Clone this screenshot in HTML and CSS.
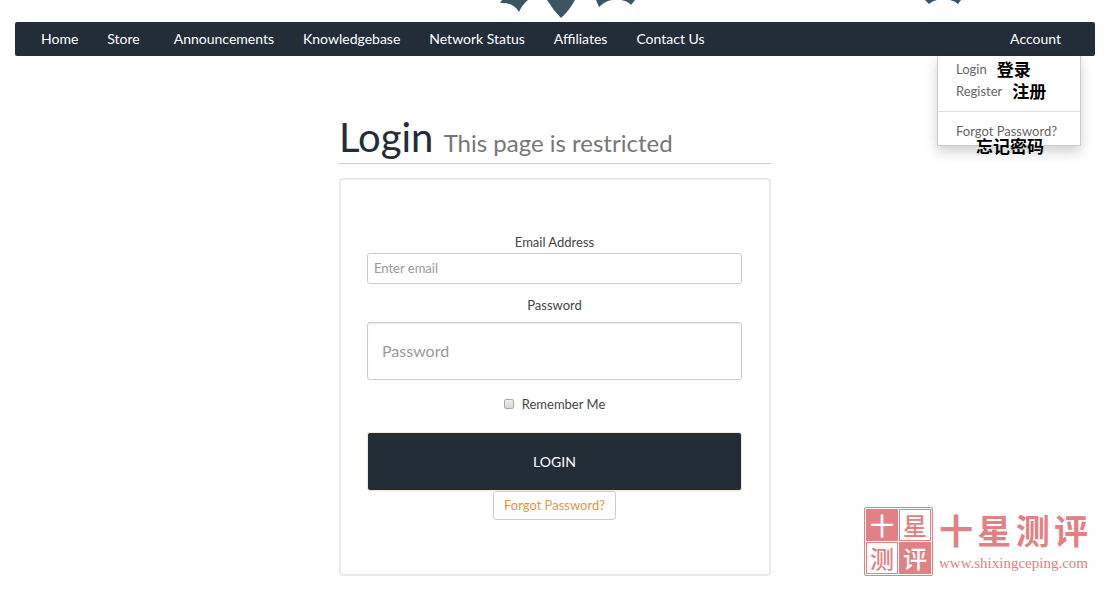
FILE: index.html
```html
<!DOCTYPE html>
<html lang="en">
<head>
<meta charset="UTF-8">
<meta name="viewport" content="width=device-width, initial-scale=1.0">
<title>Login</title>
<link rel="stylesheet" href="styles.css">
</head>
<body>
    <header class="banner">
        <svg class="banner-art" viewBox="0 0 1080 22" preserveAspectRatio="xMidYMin slice" aria-hidden="true">
            <path d="M487 0 L485 3 Q498 2 504 12 Q507 5 513 0 Z"/>
            <path d="M532 0 Q538 10 546 18 Q554 11 560 0 Z"/>
            <path d="M581 0 L584 7 Q590 1 597 0 Z"/>
            <path d="M606 0 Q613 1 616 5 L620 0 Z"/>
            <path d="M910 0 L914 4 Q917 1 922 0 Z"/>
            <path d="M935 0 Q940 1 943 4 L946 0 Z"/>
        </svg>
    </header>

    <nav class="navbar">
        <ul class="nav">
            <li><a href="#">Home</a></li>
            <li class="has-menu"><a href="#">Store</a></li>
            <li><a href="#">Announcements</a></li>
            <li><a href="#">Knowledgebase</a></li>
            <li><a href="#">Network Status</a></li>
            <li><a href="#">Affiliates</a></li>
            <li><a href="#">Contact Us</a></li>
        </ul>
        <div class="account">
            <a href="#">Account</a>
            <ul class="dropdown">
                <li><a href="#">Login</a><span class="note">登录</span></li>
                <li><a href="#">Register</a><span class="note">注册</span></li>
                <li class="divider"></li>
                <li><a href="#">Forgot Password?</a></li>
                <li class="note below">忘记密码</li>
            </ul>
        </div>
    </nav>

    <main class="login">
        <h1>Login <small>This page is restricted</small></h1>
        <form class="panel">
            <label for="email" class="email-label">Email Address</label>
            <input type="email" id="email" name="email" placeholder="Enter email">
            <label for="password" class="password-label">Password</label>
            <input type="password" id="password" name="password" class="large" placeholder="Password">
            <label class="remember"><input type="checkbox" name="remember">Remember Me</label>
            <button type="submit">LOGIN</button>
            <a class="forgot" href="#">Forgot Password?</a>
        </form>
    </main>

    <div class="brand">
        <div class="stamp">
            <span class="solid">十</span>
            <span>星</span>
            <span>测</span>
            <span class="solid">评</span>
        </div>
        <div class="brand-text">
            <div class="brand-name"><span>十</span><span>星</span><span>测</span><span>评</span></div>
            <div class="brand-url">www.shixingceping.com</div>
        </div>
    </div>
</body>
</html>
```
FILE: styles.css
```css
* {
    box-sizing: border-box;
}
body {
    margin: 0;
    padding: 0 15px;
    font-family: Lato, "Noto Sans CJK SC", sans-serif;
    font-size: 13px;
    line-height: 20px;
    color: #444;
    background-color: #fff;
}
a {
    text-decoration: none;
}
ul {
    list-style: none;
    margin: 0;
    padding: 0;
}
.banner {
    height: 22px;
}
.banner-art {
    display: block;
    width: 100%;
    height: 22px;
    fill: #3c5563;
}
.navbar {
    display: flex;
    justify-content: space-between;
    height: 34px;
    padding: 0 14px 0 26px;
    background-color: #222d38;
    border-radius: 2px;
    font-size: 14px;
    line-height: 33px;
}
.nav {
    display: flex;
    gap: 29px;
}
.has-menu {
    padding-right: 5px;
}
.navbar a {
    color: #fff;
}
.account {
    position: relative;
    padding-right: 20px;
}
.dropdown {
    position: absolute;
    top: 34px;
    right: 0;
    width: 144px;
    height: 90px;
    padding: 2px 0 0 18px;
    background-color: #fff;
    border: 1px solid #ccc;
    border-top: none;
    box-shadow: 0 6px 12px rgba(0, 0, 0, 0.18);
    font-size: 13px;
    line-height: 22px;
    white-space: nowrap;
}
.dropdown li {
    display: flex;
    gap: 10px;
}
.navbar .dropdown a {
    color: #666;
}
.note {
    font: bold 17px/22px "Noto Sans CJK SC", sans-serif;
    color: #000;
}
.dropdown .divider {
    height: 1px;
    margin: 9px 0 8px -18px;
    background-color: #e0e0e0;
}
.dropdown .below {
    position: absolute;
    left: 38px;
    bottom: -12px;
}
.login {
    width: 40%;
    margin: 0 auto;
}
h1 {
    margin: 57px 0 14px;
    padding-bottom: 1px;
    border-bottom: 1px solid #ccc;
    font-size: 40px;
    font-weight: 400;
    line-height: 49px;
    color: #222d38;
}
h1 small {
    font-size: 24px;
    line-height: 24px;
    color: #777;
}
.panel {
    display: flex;
    flex-direction: column;
    align-items: center;
    padding: 52px 27px 54px 26px;
    border: 2px solid #eaeaea;
    border-radius: 4px;
}
.panel input[type="email"],
.panel input[type="password"] {
    width: 100%;
    height: 31px;
    padding: 0 6px 1px;
    border: 1px solid #ccc;
    border-radius: 3px;
    font: 13px/20px Lato, sans-serif;
}
.panel input.large {
    height: 58px;
    padding: 0 14px 1px;
    font-size: 16px;
    box-shadow: inset 0 1px 1px rgba(0, 0, 0, 0.08);
}
.panel input::placeholder {
    color: #999;
}
.email-label {
    margin-bottom: 1px;
}
.password-label {
    margin: 11px 0 7px;
}
.remember {
    display: flex;
    align-items: center;
    gap: 8px;
    margin: 14px 0 18px;
}
.remember input {
    appearance: none;
    width: 10px;
    height: 10px;
    margin: 0;
    border: 1px solid #aaa;
    border-radius: 2px;
    background: linear-gradient(#eee, #d9d9d9);
}
.panel button {
    width: 100%;
    height: 59px;
    border: 1px solid #fae7d5;
    border-radius: 3px;
    background-color: #222d38;
    color: #fff;
    font: 14px/20px Lato, sans-serif;
    cursor: pointer;
}
.forgot {
    padding: 3px 10px 4px;
    border: 1px solid #ccc;
    border-radius: 3px;
    color: #e4954b;
}
.brand {
    position: absolute;
    right: 22px;
    top: 507px;
    display: flex;
    gap: 6px;
    color: #e28084;
}
.stamp {
    display: grid;
    grid-template-columns: 32px 32px;
    grid-template-rows: 32px 32px;
    gap: 1px;
    padding: 1px;
    border: 1px solid #e28084;
    border-radius: 2px;
}
.stamp span {
    border: 1px solid #e28084;
    font: 500 24px/29px "Noto Sans CJK SC", sans-serif;
    text-align: center;
}
.stamp .solid {
    background-color: #e28084;
    color: #fff;
}
.brand-name {
    display: flex;
    justify-content: space-between;
    font: bold 34px/46px "Noto Sans CJK SC", sans-serif;
}
.brand-url {
    font: 15px/20px "Liberation Serif", serif;
}
```
